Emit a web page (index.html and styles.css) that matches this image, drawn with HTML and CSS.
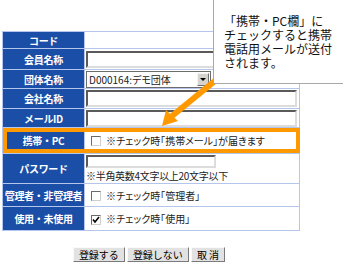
FILE: index.html
```html
<!DOCTYPE html>
<html lang="ja">

<head>
    <meta charset="UTF-8">
    <title>会員登録</title>
    <link rel="stylesheet" href="styles.css">
</head>

<body>
    <div class="page">
        <table class="form">
            <tr class="r-code">
                <th>コード</th>
                <td></td>
            </tr>
            <tr class="r-name">
                <th>会員名称</th>
                <td><span class="field"></span></td>
            </tr>
            <tr class="r-group">
                <th>団体名称</th>
                <td>
                    <span class="select">
                        <span class="select-text">D000164:デモ団体</span>
                        <span class="select-btn"></span>
                    </span>
                </td>
            </tr>
            <tr class="r-company">
                <th>会社名称</th>
                <td><span class="field"></span></td>
            </tr>
            <tr class="r-mail">
                <th>メールID</th>
                <td><span class="field"></span></td>
            </tr>
            <tr class="r-mobile">
                <th>携帯・PC</th>
                <td><span class="check"></span>※チェック時「携帯メール」が届きます</td>
            </tr>
            <tr class="r-pass">
                <th>パスワード</th>
                <td>
                    <span class="field field-short"></span>
                    <div class="note">※半角英数4文字以上20文字以下</div>
                </td>
            </tr>
            <tr class="r-admin">
                <th>管理者・非管理者</th>
                <td><span class="check"></span>※チェック時「管理者」</td>
            </tr>
            <tr class="r-use">
                <th>使用・未使用</th>
                <td>
                    <span class="check checked">
                        <svg width="8" height="8" viewBox="0 0 8 8"><path d="M1 3.5 L3 6 L7 1" fill="none" stroke="#000" stroke-width="1.6"/></svg>
                    </span>※チェック時「使用」
                </td>
            </tr>
        </table>

        <div class="buttons">
            <span class="btn">登録する</span>
            <span class="btn">登録しない</span>
            <span class="btn">取 消</span>
        </div>

        <!-- overlays: highlight box, arrow and callout -->
        <div class="highlight"></div>
        <svg class="arrow" width="343" height="265" viewBox="0 0 343 265">
            <line x1="216" y1="80" x2="172" y2="116" stroke="#ff9900" stroke-width="6"/>
            <polygon points="162,126 166,110 178,121" fill="#ff9900"/>
        </svg>
        <div class="callout">
            <div>「携帯・PC欄」に</div>
            <div>チェックすると携帯</div>
            <div>電話用メールが送付</div>
            <div>されます。</div>
        </div>
    </div>
</body>

</html>
```

FILE: styles.css
```css
body {
    margin: 0;
    background-color: #fff;
    font-family: "Noto Sans CJK JP", "Liberation Sans", sans-serif;
    font-size: 10px;
    color: #222;
}

.page {
    position: relative;
    width: 343px;
    height: 265px;
    overflow: hidden;
}

.form {
    margin: 31px 0 0 2px;
    border-collapse: separate;
    border-spacing: 1px;
    background-color: #b4c6ec;
}

.form th,
.form td {
    padding: 0;
    vertical-align: middle;
}

.form th {
    width: 81px;
    background-color: #1b4ea6;
    color: #fff;
    font-weight: bold;
    font-size: 10px;
    text-align: center;
    white-space: nowrap;
    letter-spacing: -0.3px;
}

.form td {
    width: 213px;
    background-color: #fff;
    padding-left: 1px;
    font-feature-settings: "palt";
    white-space: nowrap;
}

.r-code th { height: 16px; }
.r-name th { height: 20px; }
.r-group th { height: 18px; }
.r-company th { height: 19px; }
.r-mail th { height: 18px; }
.r-mobile th { height: 25px; }
.r-pass th { height: 29px; }
.r-admin th { height: 22px; }
.r-use th { height: 23px; }

.field {
    display: block;
    box-sizing: border-box;
    width: 211px;
    height: 17px;
    border: 2px solid;
    border-color: #5a5a5a #dcdcdc #dcdcdc #5a5a5a;
    background-color: #fff;
}

.field-short {
    width: 130px;
    height: 13px;
}

.note {
    margin-top: 2px;
    line-height: 12px;
    letter-spacing: -0.3px;
}

.select {
    display: flex;
    align-items: center;
    box-sizing: border-box;
    width: 125px;
    height: 17px;
    border: 1px solid #6b6b6b;
    background-color: #fff;
}

.select-text {
    flex: 1;
    padding-left: 2px;
    font-size: 10px;
    line-height: 15px;
}

.select-btn {
    position: relative;
    box-sizing: border-box;
    width: 12px;
    height: 13px;
    margin-right: 1px;
    background-color: #d6d3ce;
    border: 1px solid;
    border-color: #f4f4f4 #707070 #707070 #f4f4f4;
}

.select-btn::after {
    content: "";
    position: absolute;
    left: 2px;
    top: 4px;
    border-left: 3px solid transparent;
    border-right: 3px solid transparent;
    border-top: 3px solid #000;
}

.check {
    display: inline-flex;
    align-items: center;
    justify-content: center;
    box-sizing: border-box;
    width: 10px;
    height: 10px;
    margin: 0 5px 0 5px;
    vertical-align: -1px;
    border: 1px solid;
    border-color: #6a6a6a #cfcfcf #cfcfcf #6a6a6a;
    background-color: #fff;
}

.buttons {
    width: 298px;
    margin-top: 16px;
    text-align: center;
    font-size: 0;
}

.btn {
    display: inline-block;
    margin: 0 1px;
    padding: 0 5px;
    height: 15px;
    line-height: 13px;
    font-size: 10px;
    color: #000;
    background-color: #e2e2e2;
    border: 1px solid;
    border-color: #fafafa #7a7a7a #7a7a7a #fafafa;
    box-sizing: border-box;
}

.highlight {
    position: absolute;
    left: 3px;
    top: 128px;
    width: 289px;
    height: 17px;
    border: 4px solid #ff9900;
}

.arrow {
    position: absolute;
    left: 0;
    top: 0;
}

.callout {
    position: absolute;
    left: 213px;
    top: -1px;
    width: 140px;
    height: 85px;
    box-sizing: border-box;
    padding: 14px 0 0 10px;
    border: 1px solid #a8a8a8;
    background-color: #fff;
    color: #111;
    font-size: 12px;
    line-height: 14px;
}
```
